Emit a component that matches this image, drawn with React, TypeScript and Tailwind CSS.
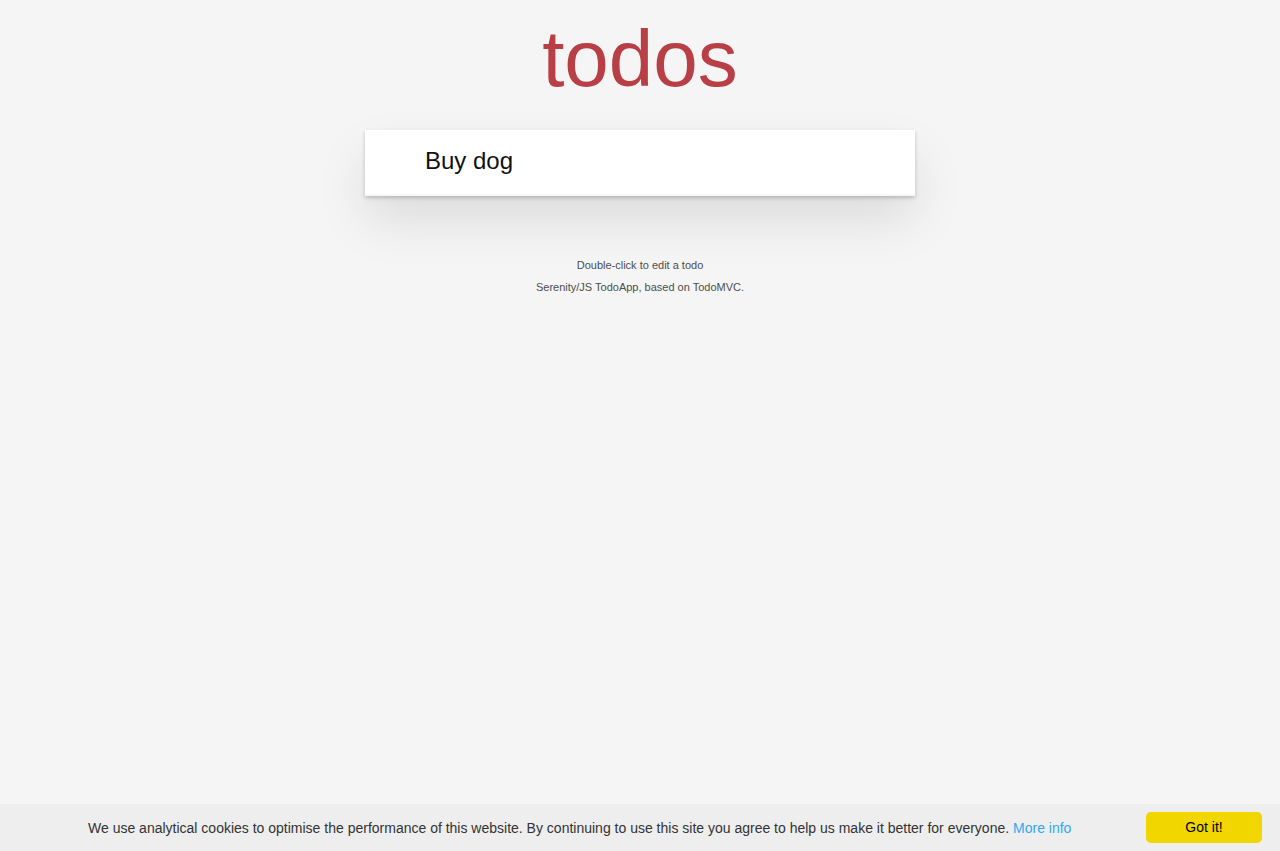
import { useState } from 'react';

export default function App() {
  const [text, setText] = useState('Buy dog');

  return (
    <div className="min-h-screen bg-[#f5f5f5] pt-[130px] font-['Liberation_Sans',Arial,sans-serif] text-[#111]">
      <section className="relative mx-auto w-[550px] bg-white shadow-[0_2px_4px_0_rgba(0,0,0,0.2),0_25px_50px_0_rgba(0,0,0,0.1)]">
        <h1 className="absolute -top-[127px] w-full text-center text-[80px] font-extralight leading-[1.4] text-[#b83f45]">
          todos
        </h1>
        <input
          className="block h-[66px] w-full bg-transparent pt-[14px] pr-4 pb-[18px] pl-[60px] text-2xl leading-[1.4] text-[#111] outline-none shadow-[inset_0_-2px_1px_rgba(0,0,0,0.03)]"
          value={text}
          onChange={(e) => setText(e.target.value)}
          placeholder="What needs to be done?"
        />
      </section>

      <footer className="mx-auto mt-[64px] text-center text-[11px] leading-none text-[#4d4d4d]">
        <p>Double-click to edit a todo</p>
        <p className="mt-[11px]">Serenity/JS TodoApp, based on TodoMVC.</p>
      </footer>

      <div className="fixed inset-x-0 bottom-0 flex h-[47px] items-center bg-[#eeeeee] pr-[18px] pl-[88px] text-[14px] text-[#333]">
        <span className="flex-1 pt-[1px]">
          We use analytical cookies to optimise the performance of this website. By continuing to use this site you agree to help us make it better for everyone.{' '}
          <a href="#" className="text-[#31a8f0]">
            More info
          </a>
        </span>
        <button className="h-[31px] w-[116px] rounded-[5px] bg-[#f1d600] text-[14px] font-normal text-black">Got it!</button>
      </div>
    </div>
  );
}
